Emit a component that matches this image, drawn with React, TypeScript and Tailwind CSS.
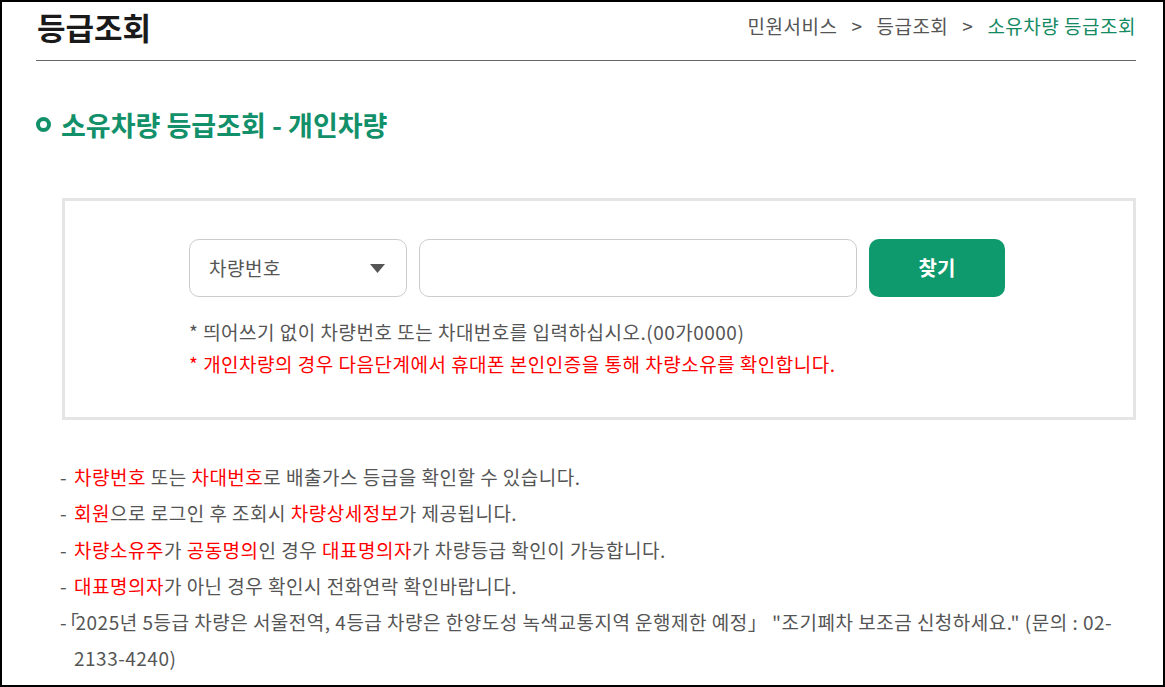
import React from "react";

const font = { fontFamily: '"Noto Sans CJK KR", "Noto Sans", sans-serif' };

const Red = ({ children }: { children: React.ReactNode }) => (
  <span className="text-[#ff0000]">{children}</span>
);

const notices: React.ReactNode[] = [
  <>
    <Red>차량번호</Red> 또는 <Red>차대번호</Red>로 배출가스 등급을 확인할 수 있습니다.
  </>,
  <>
    <Red>회원</Red>으로 로그인 후 조회시 <Red>차량상세정보</Red>가 제공됩니다.
  </>,
  <>
    <Red>차량소유주</Red>가 <Red>공동명의</Red>인 경우 <Red>대표명의자</Red>가 차량등급 확인이 가능합니다.
  </>,
  <>
    <Red>대표명의자</Red>가 아닌 경우 확인시 전화연락 확인바랍니다.
  </>,
  <>
    <span className="inline-block -ml-[14px] -mr-[4px]">「</span>2025년 5등급 차량은 서울전역, 4등급 차량은 한양도성 녹색교통지역 운행제한 예정」 "조기폐차 보조금 신청하세요." (문의 : 02-<wbr />
    <span className="whitespace-nowrap">2133-4240)</span>
  </>,
];

export default function App() {
  return (
    <div
      className="w-[1165px] h-[687px] border-2 border-black bg-white overflow-hidden text-[#555]"
      style={font}
    >
      <div className="pl-[34px] pr-[27px]">
        {/* header */}
        <div className="flex items-center justify-between h-[59px] border-b border-[#666]">
          <h1 className="text-[31px] font-bold text-[#1a1a1a] leading-none -mt-[10px] ml-[1px]">
            등급조회
          </h1>
          <div className="flex items-center gap-[14px] text-[19px] tracking-[0.5px] leading-none -mt-[12px]">
            <span>민원서비스</span>
            <span>&gt;</span>
            <span>등급조회</span>
            <span>&gt;</span>
            <span className="text-[#138a62]">소유차량 등급조회</span>
          </div>
        </div>

        {/* section title */}
        <div className="flex items-center gap-[10px] mt-[50px]">
          <span className="w-[15px] h-[15px] rounded-full border-4 border-[#12906a]" />
          <h2 className="text-[27px] font-bold text-[#12906a] leading-none">
            소유차량 등급조회 - 개인차량
          </h2>
        </div>

        {/* search box */}
        <div className="ml-[26px] mt-[60px] h-[222px] border-[3px] border-[#e5e5e5] pl-[124px] pt-[38px]">
          <div className="flex gap-[12px]">
            <div className="w-[218px] h-[58px] rounded-[10px] border border-[#ccc] flex items-center justify-between pl-[19px] pr-[21px]">
              <span className="text-[19px] tracking-[0.5px]">차량번호</span>
              <svg width="15" height="9" viewBox="0 0 15 9">
                <polygon points="0,0 15,0 7.5,9" fill="#555" />
              </svg>
            </div>
            <div className="w-[438px] h-[58px] rounded-[10px] border border-[#ccc]" />
            <button className="w-[136px] h-[58px] rounded-[10px] bg-[#0f9a6e] text-white text-[20px] font-bold">
              찾기
            </button>
          </div>
          <p className="mt-[19px] text-[19px] tracking-[0.5px] leading-[32px]">
            * 띄어쓰기 없이 차량번호 또는 차대번호를 입력하십시오.(00가0000)
          </p>
          <p className="text-[19px] tracking-[0.5px] leading-[32px] text-[#ff0000]">
            * 개인차량의 경우 다음단계에서 휴대폰 본인인증을 통해 차량소유를 확인합니다.
          </p>
        </div>

        {/* notices */}
        <ul className="mt-[39px] pl-[24px] pr-[14px] text-[19px] tracking-[0.5px] leading-[36.3px]">
          {notices.map((n, i) => (
            <li key={i} className="flex">
              <span className="shrink-0 w-[14px]">-</span>
              <span>{n}</span>
            </li>
          ))}
        </ul>
      </div>
    </div>
  );
}
